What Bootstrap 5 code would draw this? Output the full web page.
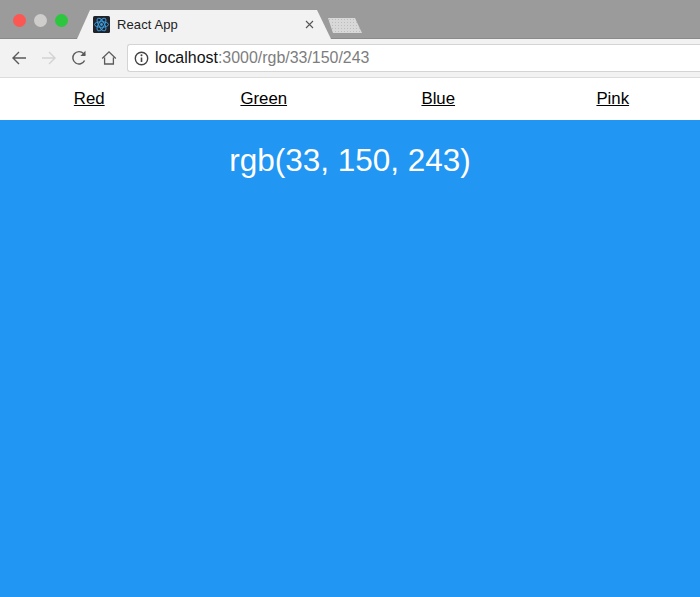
<!DOCTYPE html>
<html lang="en">
<head>
<meta charset="utf-8">
<title>React App</title>
<link href="https://cdn.jsdelivr.net/npm/bootstrap@5.3.0/dist/css/bootstrap.min.css" rel="stylesheet">
<style>
html,body{height:100%;margin:0}
body{font-family:"Liberation Sans",Arial,sans-serif;background:#2196f3;overflow:hidden}
.shell{height:597px}
.tabstrip{height:39px;background:#9b9b9b;border-bottom:1px solid #8a8a8a}
.lights{padding-left:13px;gap:8px;width:77px;height:39px}
.light{width:13px;height:13px;border-radius:50%;display:block;margin-top:1px}
.l-red{background:#fc5753}.l-grey{background:#cfcdcb}.l-green{background:#2dc63f}
.tabshape{width:254px;height:29px;margin-top:10px;background:#f2f2f2;clip-path:polygon(0 100%,13px 0,240px 0,254px 100%);font-size:13px;color:#222;padding:0 17px 0 16px}
.tabtitle{margin-left:7px;flex:1;letter-spacing:.1px}
.ghost{width:34px;height:15px;margin:18px 0 0 -3px;background:#d8d8d8;clip-path:polygon(0 0,27px 0,34px 100%,5px 100%);background-image:radial-gradient(#bdbdbd 30%,transparent 35%);background-size:3px 3px}
.toolbar{height:39px;background:#f2f2f2;border-bottom:1px solid #dcdcdc;padding:0 0 0 10px}
.tbtn{width:18px;height:18px;display:block;flex:none}
.urlbox{flex:1;height:28px;margin-left:1px;background:#fff;border:1px solid #d4d4d4;border-right:0;border-radius:3px 0 0 3px;padding-left:6px;font-size:15.95px;color:#111}
.urlrest{color:#7d7d7d}
.urlicon{width:15px;height:15px;margin-right:6px;flex:none}
.linkbar{height:42px;background:#fff;padding-left:2px}
.linkbar a{color:#000;font-size:16.8px;width:175px;text-align:center;text-decoration:none;line-height:20px}
.linkbar a span{text-decoration:underline}
.stage{background:#2196f3;color:#fff;flex:1}
.stage h1{font-family:"Liberation Sans",Arial,sans-serif;font-size:31.5px;font-weight:400;line-height:36px;margin:22px 0 0;text-align:center}
</style>
</head>
<body>
<div class="shell d-flex flex-column">
  <div class="tabstrip d-flex flex-none">
    <div class="lights d-flex align-items-center">
      <span class="light l-red"></span><span class="light l-grey"></span><span class="light l-green"></span>
    </div>
    <div class="tabshape d-flex align-items-center">
      <svg width="17" height="17" viewBox="0 0 17 17" aria-hidden="true"><rect width="17" height="17" rx="1.5" fill="#20232a"/><g fill="none" stroke="#3b9ee0" stroke-width="1"><ellipse cx="8.5" cy="8.5" rx="7" ry="2.8"/><ellipse cx="8.5" cy="8.5" rx="7" ry="2.8" transform="rotate(60 8.5 8.5)"/><ellipse cx="8.5" cy="8.5" rx="7" ry="2.8" transform="rotate(120 8.5 8.5)"/></g><circle cx="8.5" cy="8.5" r="1.4" fill="#3b9ee0"/></svg>
      <span class="tabtitle">React App</span>
      <svg width="9" height="9" viewBox="0 0 9 9" aria-hidden="true"><path d="M1 1l7 7M8 1L1 8" stroke="#555" stroke-width="1.1" fill="none"/></svg>
    </div>
    <div class="ghost"></div>
  </div>
  <div class="toolbar d-flex align-items-center gap-2">
    <svg class="tbtn" viewBox="0 0 18 18" aria-hidden="true"><path d="M16 9H3M9 3L3 9l6 6" fill="none" stroke="#5a5a5a" stroke-width="1.4"/></svg>
    <svg class="tbtn ms-1" viewBox="0 0 18 18" aria-hidden="true"><path d="M2 9h13M9 3l6 6-6 6" fill="none" stroke="#d2d2d2" stroke-width="1.4"/></svg>
    <svg class="tbtn ms-1" viewBox="0 0 18 18" aria-hidden="true"><path d="M14.6 11.5A6.2 6.2 0 1 1 13.6 4.6L15 6" fill="none" stroke="#5a5a5a" stroke-width="1.4"/><path d="M15.5 1.8V7h-5.2z" fill="#5a5a5a"/></svg>
    <svg class="tbtn ms-1" viewBox="0 0 18 18" aria-hidden="true"><path d="M2.2 9.5L9 2.8l6.8 6.7M4.6 8.5V15h8.8V8.5" fill="none" stroke="#5a5a5a" stroke-width="1.3"/></svg>
    <div class="urlbox d-flex align-items-center">
      <svg class="urlicon" viewBox="0 0 15 15" aria-hidden="true"><circle cx="7.5" cy="7.5" r="6.2" fill="none" stroke="#444" stroke-width="1.4"/><path d="M7.5 6.5v4.5" stroke="#444" stroke-width="1.6"/><circle cx="7.5" cy="4.3" r="1" fill="#444"/></svg>
      <span>localhost<span class="urlrest">:3000/rgb/33/150/243</span></span>
    </div>
  </div>
  <nav class="linkbar d-flex align-items-center justify-content-around">
    <a href="#"><span>Red</span></a>
    <a href="#"><span>Green</span></a>
    <a href="#"><span>Blue</span></a>
    <a href="#"><span>Pink</span></a>
  </nav>
  <main class="stage">
    <h1>rgb(33, 150, 243)</h1>
  </main>
</div>
<script src="https://cdn.jsdelivr.net/npm/bootstrap@5.3.0/dist/js/bootstrap.bundle.min.js"></script>
</body>
</html>
